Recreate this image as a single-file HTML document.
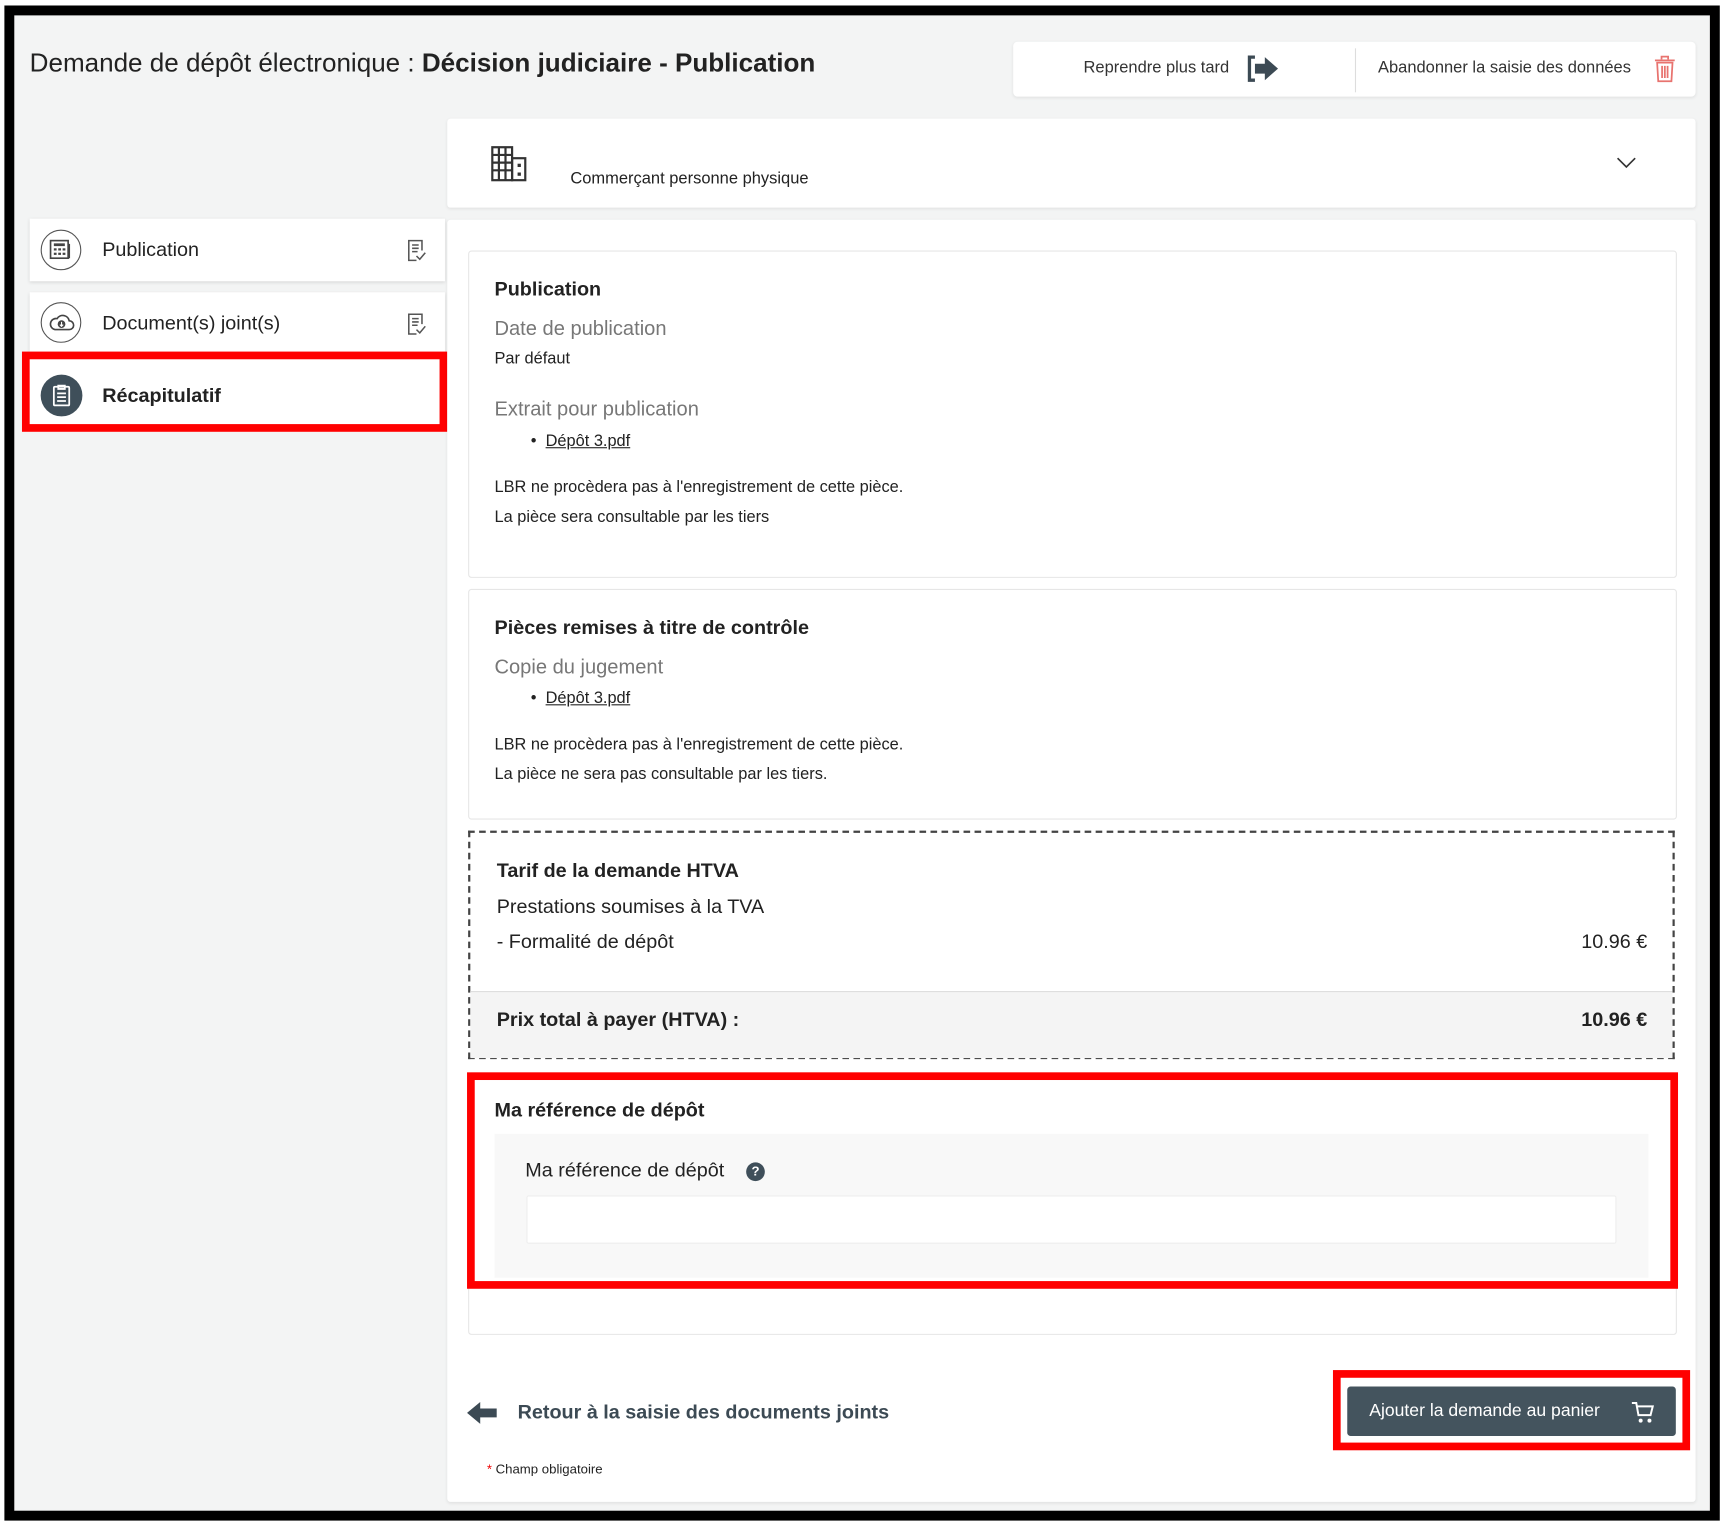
<!DOCTYPE html>
<html><head><meta charset="utf-8">
<style>
html,body{margin:0;padding:0;width:1723px;height:1525px;overflow:hidden;background:#fff;}
#w{position:absolute;left:0;top:0;width:1568px;height:1388px;transform:scale(1.0989,1.0987);transform-origin:0 0;font-family:"Liberation Sans",Arial,sans-serif;color:#222;}
.a{position:absolute;}
.t{position:absolute;white-space:nowrap;line-height:1;}
.frame{left:4px;top:5px;width:1561px;height:1379px;box-sizing:border-box;border:9px solid #000;background:#f3f4f4;}
.card{background:#fff;box-shadow:0 1px 3px rgba(0,0,0,.08);}
.sec{background:#fff;border:1px solid #e6e6e6;border-radius:3px;}
.side{left:27px;width:378px;background:#fff;box-shadow:0 1px 3px rgba(0,0,0,.12);}
.circ{position:absolute;left:10px;width:35px;height:35px;border:1.5px solid #555;border-radius:50%;}
.gray{color:#777;font-size:18.3px;}
.sm{font-size:14.9px;color:#222;}
.b18{font-size:18px;font-weight:bold;}
u{text-decoration:underline;}
</style></head><body><div id="w">
<div class="a frame"></div>

<div class="t" style="left:27px;top:47px;font-size:23.7px;">Demande de dépôt électronique : <b>Décision judiciaire - Publication</b></div>

<!-- top buttons -->
<div class="a card" style="left:922px;top:38px;width:621px;height:50px;border-radius:4px;"></div>
<div class="a" style="left:1233px;top:44px;width:1px;height:40px;background:#ddd;"></div>
<div class="t" style="left:986px;top:54px;font-size:15px;color:#333;">Reprendre plus tard</div>
<svg class="a" style="left:1133px;top:49px" width="32" height="27" viewBox="0 0 32 27"><path d="M9 3H4v21h5" fill="none" stroke="#3c4a54" stroke-width="3"/><path d="M9 9h9V3l12 10.5L18 24v-6H9z" fill="#3c4a54"/></svg>
<div class="t" style="left:1254px;top:54px;font-size:15px;color:#333;">Abandonner la saisie des données</div>
<svg class="a" style="left:1505px;top:50px" width="20" height="26" viewBox="0 0 20 26"><g fill="none" stroke="#e8736f" stroke-width="1.6"><path d="M7 4V1.5h6V4M1 5h18M3 7h14l-1 17H4z"/><path d="M7.5 10v11M10 10v11M12.5 10v11"/></g></svg>

<!-- header card -->
<div class="a card" style="left:407px;top:108px;width:1136px;height:81px;border-radius:3px;"></div>
<svg class="a" style="left:446px;top:132px" width="34" height="34" viewBox="0 0 34 34"><g fill="none" stroke="#333" stroke-width="2"><rect x="2" y="2" width="18" height="30"/><rect x="20" y="12" width="12" height="20"/><path d="M2 9h18M2 16h18M2 23h18M8 2v30M14 2v30"/></g><g fill="#333"><rect x="25" y="17" width="3" height="3"/><rect x="25" y="25" width="3" height="3"/></g></svg>
<div class="t" style="left:519px;top:155px;font-size:15px;">Commerçant personne physique</div>
<svg class="a" style="left:1471px;top:143px" width="18" height="11" viewBox="0 0 18 11"><path d="M1 1l8 8 8-8" fill="none" stroke="#333" stroke-width="1.5"/></svg>

<!-- sidebar -->
<div class="a side" style="top:199px;height:57px;"><div class="circ" style="top:10px"></div>
<svg class="a" style="left:18px;top:19px" width="20" height="18" viewBox="0 0 20 18"><rect x="1" y="1" width="16" height="16" fill="none" stroke="#444" stroke-width="1.5"/><rect x="4" y="3.5" width="10" height="2.5" fill="#444"/><g fill="#444"><rect x="4" y="8" width="2.5" height="2"/><rect x="8" y="8" width="2.5" height="2"/><rect x="12" y="8" width="2.5" height="2"/><rect x="4" y="12" width="2.5" height="2"/><rect x="8" y="12" width="2.5" height="2"/><rect x="12" y="12" width="2.5" height="2"/></g><path d="M18 4v13" stroke="#444" stroke-width="1.5"/></svg>
<div class="t" style="left:66px;top:19px;font-size:18px;">Publication</div>
<svg class="a" style="left:343px;top:18px" width="18" height="22" viewBox="0 0 18 22"><g fill="none" stroke="#555" stroke-width="1.4"><path d="M9 20H2V2h12v9"/><path d="M5 6h6M5 9h6M5 12h5"/><path d="M9 16l3 3 5-6"/></g></svg></div>

<div class="a side" style="top:266px;height:56px;"><div class="circ" style="top:9px"></div>
<svg class="a" style="left:17px;top:18px" width="24" height="18" viewBox="0 0 24 18"><path d="M6 16h13a4 4 0 0 0 0-8 6 6 0 0 0-11-2A5 5 0 0 0 6 16z" fill="none" stroke="#444" stroke-width="1.5"/><circle cx="12" cy="11" r="3.5" fill="#444"/><path d="M12 9v4M10.5 11.5L12 13l1.5-1.5" stroke="#fff" stroke-width="1" fill="none"/></svg>
<div class="t" style="left:66px;top:19px;font-size:18px;">Document(s) joint(s)</div>
<svg class="a" style="left:343px;top:18px" width="18" height="22" viewBox="0 0 18 22"><g fill="none" stroke="#555" stroke-width="1.4"><path d="M9 20H2V2h12v9"/><path d="M5 6h6M5 9h6M5 12h5"/><path d="M9 16l3 3 5-6"/></g></svg></div>

<div class="a" style="left:20px;top:320px;width:387px;height:73px;box-sizing:border-box;border:7px solid #f00;background:#fff;"></div>
<div class="a" style="left:37px;top:341px;width:38px;height:38px;border-radius:50%;background:#3f4f5a;"></div>
<svg class="a" style="left:47px;top:349px" width="18" height="22" viewBox="0 0 18 22"><g fill="none" stroke="#fff" stroke-width="1.6"><rect x="2" y="3" width="14" height="17" rx="1"/><path d="M6 2h6v3H6zM5 9h8M5 12.5h8M5 16h8"/></g></svg>
<div class="t" style="left:93px;top:351px;font-size:18px;font-weight:bold;">Récapitulatif</div>

<!-- main card -->
<div class="a card" style="left:407px;top:200px;width:1136px;height:1167px;border-radius:3px;"></div>

<!-- section 1 -->
<div class="a sec" style="left:426px;top:228px;width:1098px;height:296px;"></div>
<div class="t b18" style="left:450px;top:254px;">Publication</div>
<div class="t gray" style="left:450px;top:290px;">Date de publication</div>
<div class="t sm" style="left:450px;top:320px;">Par défaut</div>
<div class="t gray" style="left:450px;top:363px;">Extrait pour publication</div>
<div class="t sm" style="left:483px;top:395px;">•&nbsp; <u>Dépôt 3.pdf</u></div>
<div class="t sm" style="left:450px;top:437px;">LBR ne procèdera pas à l'enregistrement de cette pièce.</div>
<div class="t sm" style="left:450px;top:464px;">La pièce sera consultable par les tiers</div>

<!-- section 2 -->
<div class="a sec" style="left:426px;top:536px;width:1098px;height:208px;"></div>
<div class="t b18" style="left:450px;top:562px;">Pièces remises à titre de contrôle</div>
<div class="t gray" style="left:450px;top:598px;">Copie du jugement</div>
<div class="t sm" style="left:483px;top:629px;">•&nbsp; <u>Dépôt 3.pdf</u></div>
<div class="t sm" style="left:450px;top:671px;">LBR ne procèdera pas à l'enregistrement de cette pièce.</div>
<div class="t sm" style="left:450px;top:698px;">La pièce ne sera pas consultable par les tiers.</div>

<!-- tarif -->
<div class="a" style="left:426px;top:756px;width:1098px;height:208px;box-sizing:border-box;border:2px dashed #444;background:#fff;"></div>
<div class="a" style="left:428px;top:902px;width:1094px;height:60px;background:#f4f4f4;border-top:1px solid #ddd;"></div>
<div class="t b18" style="left:452px;top:783px;">Tarif de la demande HTVA</div>
<div class="t" style="left:452px;top:816px;font-size:18px;">Prestations soumises à la TVA</div>
<div class="t" style="left:452px;top:848px;font-size:18px;">- Formalité de dépôt</div>
<div class="t" style="right:69px;top:848px;font-size:18px;">10.96 €</div>
<div class="t b18" style="left:452px;top:919px;">Prix total à payer (HTVA) :</div>
<div class="t b18" style="right:69px;top:919px;">10.96 €</div>

<!-- reference section -->
<div class="a sec" style="left:426px;top:976px;width:1098px;height:237px;"></div>
<div class="a" style="left:450px;top:1032px;width:1050px;height:131px;background:#f8f8f8;"></div>
<div class="a" style="left:479px;top:1088px;width:992px;height:44px;background:#fff;border:1px solid #eee;box-sizing:border-box;border-radius:2px;"></div>
<div class="a" style="left:425px;top:976px;width:1102px;height:197px;box-sizing:border-box;border:7px solid #f00;"></div>
<div class="t b18" style="left:450px;top:1001px;">Ma référence de dépôt</div>
<div class="t" style="left:478px;top:1056px;font-size:18px;">Ma référence de dépôt</div>
<div class="a" style="left:679px;top:1058px;width:17px;height:17px;border-radius:50%;background:#3f4f5a;color:#fff;font-size:12px;font-weight:bold;text-align:center;line-height:17px;">?</div>

<!-- bottom -->
<svg class="a" style="left:425px;top:1275px" width="28" height="22" viewBox="0 0 28 22"><path d="M0 11L12 1v6h15v8H12v6z" fill="#3c4a54"/></svg>
<div class="t" style="left:471px;top:1276px;font-size:18px;font-weight:bold;color:#3c4a54;">Retour à la saisie des documents joints</div>
<div class="a" style="left:1213px;top:1247px;width:325px;height:73px;box-sizing:border-box;border:7px solid #f00;background:#fff;"></div>
<div class="a" style="left:1226px;top:1262px;width:299px;height:45px;background:#44545e;border-radius:3px;"></div>
<div class="t" style="left:1246px;top:1277px;font-size:16px;color:#fff;">Ajouter la demande au panier</div>
<svg class="a" style="left:1484px;top:1275px" width="22" height="21" viewBox="0 0 22 21"><g fill="none" stroke="#fff" stroke-width="1.8"><path d="M1 2h4l2 11h11l2-8H6"/></g><circle cx="9" cy="18" r="1.8" fill="#fff"/><circle cx="17" cy="18" r="1.8" fill="#fff"/></svg>
<div class="t" style="left:443px;top:1331px;font-size:12px;"><span style="color:#e00;">*</span> Champ obligatoire</div>
</div></body></html>
